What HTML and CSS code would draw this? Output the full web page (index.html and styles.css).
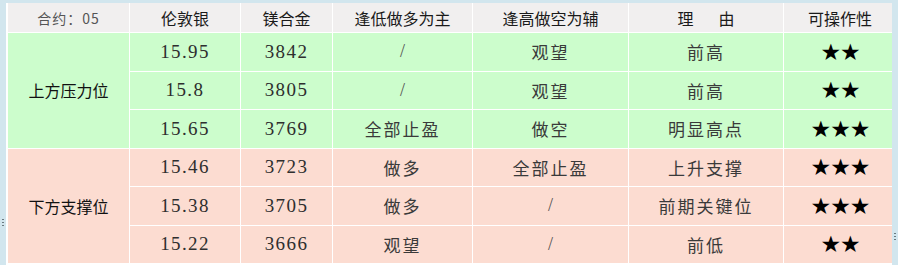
FILE: index.html
```html
<!DOCTYPE html>
<html lang="zh-CN">
<head>
<meta charset="utf-8">
<title>合约 05</title>
<link rel="stylesheet" href="styles.css">
</head>
<body>
<div class="frame">
  <div class="grip grip-left"></div>
  <div class="panel">
    <div class="grid">
      <div class="cell head contract">合约：05</div>
      <div class="cell head">伦敦银</div>
      <div class="cell head">镁合金</div>
      <div class="cell head">逢低做多为主</div>
      <div class="cell head">逢高做空为辅</div>
      <div class="cell head">理<span class="sp"></span>由</div>
      <div class="cell head">可操作性</div>

      <div class="cell up label span3">上方压力位</div>
      <div class="cell up num">15.95</div>
      <div class="cell up num">3842</div>
      <div class="cell up slash">/</div>
      <div class="cell up txt">观望</div>
      <div class="cell up txt">前高</div>
      <div class="cell up star">★★</div>

      <div class="cell up num">15.8</div>
      <div class="cell up num">3805</div>
      <div class="cell up slash">/</div>
      <div class="cell up txt">观望</div>
      <div class="cell up txt">前高</div>
      <div class="cell up star">★★</div>

      <div class="cell up num">15.65</div>
      <div class="cell up num">3769</div>
      <div class="cell up txt">全部止盈</div>
      <div class="cell up txt">做空</div>
      <div class="cell up txt">明显高点</div>
      <div class="cell up star">★★★</div>

      <div class="cell down label span3">下方支撑位</div>
      <div class="cell down num">15.46</div>
      <div class="cell down num">3723</div>
      <div class="cell down txt">做多</div>
      <div class="cell down txt">全部止盈</div>
      <div class="cell down txt">上升支撑</div>
      <div class="cell down star">★★★</div>

      <div class="cell down num">15.38</div>
      <div class="cell down num">3705</div>
      <div class="cell down txt">做多</div>
      <div class="cell down slash">/</div>
      <div class="cell down txt">前期关键位</div>
      <div class="cell down star">★★★</div>

      <div class="cell down num">15.22</div>
      <div class="cell down num">3666</div>
      <div class="cell down txt">观望</div>
      <div class="cell down slash">/</div>
      <div class="cell down txt">前低</div>
      <div class="cell down star">★★</div>
    </div>
  </div>
  <div class="grip grip-right"></div>
</div>
</body>
</html>
```

FILE: styles.css
```css
html, body {
  margin: 0;
  padding: 0;
}
body {
  background: #d2e6ee;
  width: 898px;
  height: 265px;
  overflow: hidden;
  font-family: "Noto Sans CJK SC", "Noto Sans", sans-serif;
}
.frame {
  position: relative;
  padding: 3px 6px 0 6px;
  height: 262px;
}
.panel {
  background: #ffffff;
  padding: 0 2px;
  height: 262px;
  overflow: hidden;
}
.grid {
  display: grid;
  grid-template-columns: 121px 110px 91px 139px 155px 154px 112px;
  grid-template-rows: 29px repeat(6, 37.5px);
  column-gap: 1px;
  row-gap: 1px;
  background: #ffffff;
  width: 888px;
}
.cell {
  display: flex;
  align-items: center;
  justify-content: center;
  white-space: nowrap;
}
.head {
  background: #f1efef;
  font-size: 16px;
  color: #1a1a1a;
  padding-top: 1px;
}
.contract {
  font-size: 14px;
  color: #555555;
  letter-spacing: 1px;
}
.sp {
  display: inline-block;
  width: 25px;
}
.up { background: #ccfdcc; }
.down { background: #fcdcd1; }
.label {
  font-size: 16px;
  color: #111111;
}
.span3 { grid-row: span 3; }
.num {
  font-family: "Liberation Serif", serif;
  font-size: 19px;
  letter-spacing: 1.4px;
  color: #2e2e2e;
}
.slash {
  font-family: "Liberation Serif", serif;
  font-size: 18px;
  color: #555555;
}
.txt {
  font-size: 17px;
  letter-spacing: 2px;
  color: #3a3a3a;
}
.star {
  font-family: "DejaVu Sans", sans-serif;
  font-size: 23px;
  letter-spacing: -1px;
  color: #000000;
}
.grip {
  position: absolute;
  width: 2px;
  height: 10px;
  background-image: radial-gradient(circle, #6a7a80 45%, transparent 50%);
  background-size: 2px 3px;
}
.grip-left { left: 2px; top: 218px; }
.grip-right { right: 2px; top: 232px; }
```
